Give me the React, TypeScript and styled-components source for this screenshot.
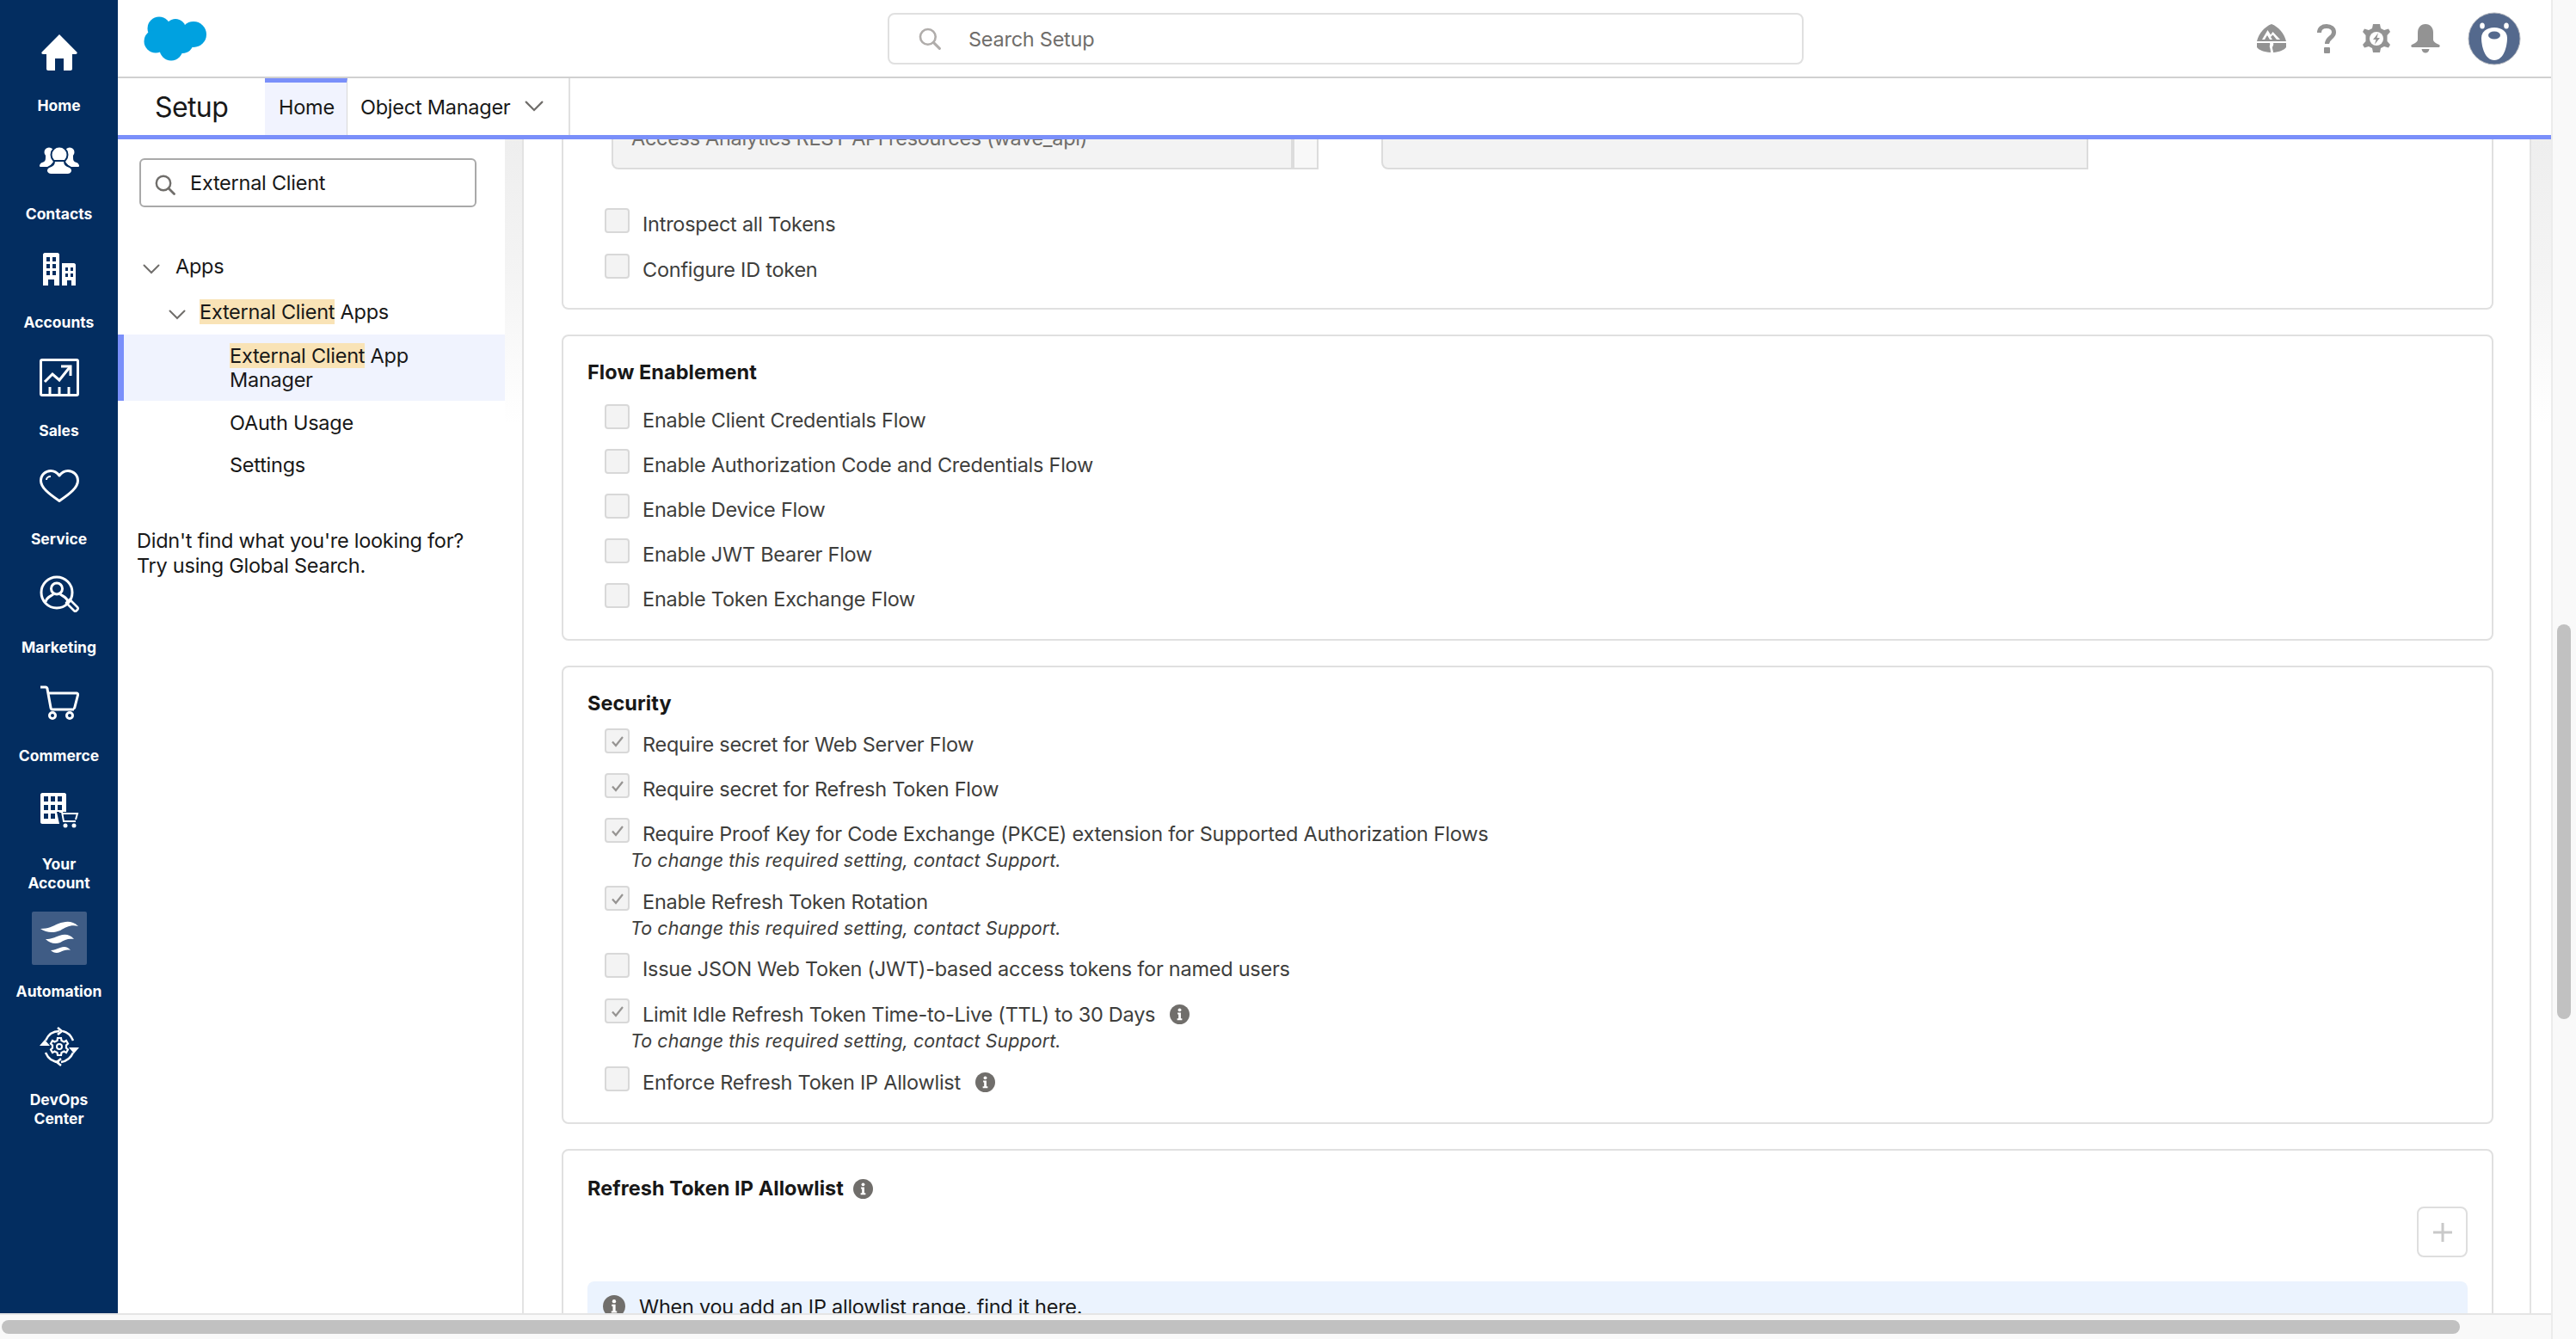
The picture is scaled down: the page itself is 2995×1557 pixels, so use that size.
import React from 'react';
import styled, { createGlobalStyle } from 'styled-components';

const FONT = `Inter, "Liberation Sans", Arial, sans-serif`;

const GlobalStyle = createGlobalStyle`
  html, body {
    margin: 0;
    padding: 0;
    width: 2995px;
    height: 1557px;
    overflow: hidden;
    background: #fff;
  }

  body {
    font-family: ${FONT};
    letter-spacing: -0.25px;
    color: #3e3e3c;
  }
`;

const Page = styled.div`
  display: flex;
  width: 2995px;
  height: 1557px;
`;

const Frame = styled.div`
  display: flex;
  flex-direction: column;
  width: 2966px;
  height: 1557px;
`;

const Shell = styled.div`
  display: flex;
  height: 1527px;
  border-bottom: 2px solid #e5e5e5;
  box-sizing: content-box;
  overflow: hidden;
`;

const Nav = styled.nav`
  width: 137px;
  flex: none;
  background: #032d60;
  padding-top: 19px;
`;

const NavItem = styled.a`
  display: flex;
  flex-direction: column;
  align-items: center;
  padding: 11px 0;
  color: #fff;
`;

const NavIcon = styled.div<{ $active?: boolean }>`
  display: flex;
  align-items: center;
  justify-content: center;
  width: 64px;
  height: 62px;
  background: ${(p) => (p.$active ? '#3f5c85' : 'transparent')};
  border-radius: 2px;
`;

const NavLabel = styled.div`
  margin-top: 20px;
  font-size: 17.5px;
  line-height: 22px;
  font-weight: 700;
  letter-spacing: 0;
  text-align: center;
  white-space: pre-line;
`;

const Main = styled.div`
  flex: 1;
  min-width: 0;
  display: flex;
  flex-direction: column;
`;

const TopBar = styled.header`
  display: flex;
  align-items: center;
  height: 91px;
  flex: none;
  box-sizing: border-box;
  border-bottom: 2px solid #d0d0d0;
  padding-left: 30px;
`;

const GlobalSearch = styled.div`
  display: flex;
  align-items: center;
  box-sizing: border-box;
  width: 1065px;
  height: 60px;
  margin-left: 792px;
  margin-top: 1px;
  padding-left: 34px;
  border: 2px solid #e0e0e0;
  border-radius: 8px;
  font-size: 23.5px;
  color: #706e6b;
`;

const GlobalSearchText = styled.span`
  margin-left: 32px;
`;

const TopIcons = styled.div`
  display: flex;
  align-items: center;
  margin-left: 527px;
`;

const TopIconSlot = styled.div<{ $gap?: number }>`
  display: flex;
  margin-left: ${(p) => p.$gap ?? 0}px;
`;

const TabBar = styled.div`
  display: flex;
  align-items: stretch;
  height: 71px;
  flex: none;
  box-sizing: border-box;
  border-bottom: 5px solid #7a8ffa;
`;

const AppName = styled.div`
  display: flex;
  align-items: center;
  width: 171px;
  padding-left: 43px;
  box-sizing: border-box;
  font-size: 32px;
  letter-spacing: -0.6px;
  color: #181818;
`;

const TabHome = styled.div`
  display: flex;
  align-items: center;
  box-sizing: border-box;
  width: 96px;
  padding: 0 0 5px 16px;
  background: #f1f3fe;
  border-top: 5px solid #7a8ffa;
  border-right: 1px solid #d8d8d8;
  font-size: 23.5px;
  color: #181818;
`;

const TabObject = styled.div`
  display: flex;
  align-items: center;
  gap: 17px;
  box-sizing: border-box;
  width: 259px;
  padding-left: 15px;
  border-right: 2px solid #e0e0e0;
  font-size: 23.5px;
  color: #181818;
`;

const Body = styled.div`
  flex: 1;
  min-height: 0;
  display: flex;
`;

const SetupPanel = styled.aside`
  width: 450px;
  flex: none;
`;

const QuickFind = styled.div`
  display: flex;
  align-items: center;
  box-sizing: border-box;
  width: 392px;
  height: 57px;
  margin: 22px 0 0 25px;
  padding-left: 16px;
  border: 2px solid #a9a9a9;
  border-radius: 6px;
  font-size: 23.5px;
  color: #181818;

  svg {
    margin-top: 5px;
  }
`;

const QuickFindText = styled.span`
  margin-left: 17px;
`;

const Tree = styled.div`
  margin-top: 41px;
  font-size: 23.5px;
  color: #181818;
`;

const TreeRow = styled.div<{ $indent: number; $h: number }>`
  display: flex;
  align-items: center;
  height: ${(p) => p.$h}px;
  padding-left: ${(p) => p.$indent}px;
`;

const Caret = styled.span<{ $w: number }>`
  display: flex;
  width: ${(p) => p.$w}px;
  flex: none;
  margin-top: 7px;
`;

const Selected = styled.div`
  display: flex;
  align-items: center;
  box-sizing: border-box;
  height: 77px;
  padding-left: 123px;
  background: #f0f3fe;
  border-left: 7px solid #7a8ffa;
  line-height: 28px;
`;

const Mark = styled.mark`
  background: #f9e3b6;
  color: inherit;
`;

const NotFound = styled.p`
  margin: 49px 0 0 22px;
  font-size: 23.5px;
  line-height: 29px;
  color: #181818;
`;

const Gutter = styled.div<{ $w: number; $border?: boolean }>`
  width: ${(p) => p.$w}px;
  flex: none;
  box-sizing: border-box;
  background: linear-gradient(to bottom, #eeeeee 0, #f4f4f4 160px, #ffffff 330px);
  border-right: ${(p) => (p.$border ? '2px solid #e3e3e3' : 'none')};
`;

const Content = styled.main`
  flex: 1;
  min-width: 0;
  display: flex;
  flex-direction: column;
  gap: 29px;
  padding: 0 42px 0 44px;
  overflow: hidden;
  border-right: 2px solid #e3e3e3;
`;

const Card = styled.section<{ $top?: number; $clipped?: boolean; $bottom?: number }>`
  flex: none;
  box-sizing: border-box;
  padding: ${(p) => p.$top ?? 27}px 28px ${(p) => p.$bottom ?? 13}px;
  border: 2px solid #e0e0e0;
  border-top-width: ${(p) => (p.$clipped ? '0' : '2px')};
  border-radius: ${(p) => (p.$clipped ? '0 0 8px 8px' : '8px')};
`;

const CardTitle = styled.h3<{ $gap: number }>`
  display: flex;
  align-items: center;
  gap: 11px;
  margin: 0 0 ${(p) => p.$gap}px;
  font-size: 23.5px;
  line-height: 30px;
  font-weight: 700;
  letter-spacing: 0.05px;
  color: #181818;
`;

const DualList = styled.div`
  display: flex;
  margin: 0 0 45px 28px;
`;

const ListBox = styled.div<{ $w: number }>`
  width: ${(p) => p.$w}px;
  height: 35px;
  box-sizing: border-box;
  overflow: hidden;
  background: #f3f3f3;
  border: 2px solid #dcdcdc;
  border-top: 0;
  border-radius: 0 0 0 8px;
  padding-left: 21px;
  font-size: 23.5px;
  line-height: 30px;
  letter-spacing: -0.3px;
  color: #706e6b;
`;

const ListText = styled.div`
  margin-top: -16px;
  white-space: nowrap;
`;

const ListTrack = styled.div`
  width: 30px;
  height: 35px;
  margin-right: 73px;
  box-sizing: border-box;
  background: #f8f8f8;
  border: 2px solid #dcdcdc;
  border-top: 0;
`;

const CheckItem = styled.div<{ $h: number }>`
  height: ${(p) => p.$h}px;
  margin-left: 20px;
`;

const CheckRow = styled.div`
  display: flex;
  height: 29px;
`;

const CheckBox = styled.span`
  display: flex;
  align-items: center;
  justify-content: center;
  flex: none;
  box-sizing: border-box;
  width: 29px;
  height: 29px;
  background: #f3f3f3;
  border: 2px solid #d8d8d8;
  border-radius: 4px;
`;

const CheckLabel = styled.span`
  display: flex;
  align-items: center;
  gap: 17px;
  margin-left: 15px;
  margin-top: 4px;
  height: 29px;
  font-size: 23.5px;
  color: #3e3e3c;
  white-space: nowrap;
`;

const Hint = styled.div`
  margin: 7px 0 0 30px;
  font-size: 21.5px;
  line-height: 26px;
  font-style: italic;
  letter-spacing: 0.05px;
  color: #3e3e3c;
`;

const ButtonRow = styled.div`
  display: flex;
  justify-content: flex-end;
  margin-top: 6px;
`;

const IconButton = styled.div`
  display: flex;
  align-items: center;
  justify-content: center;
  box-sizing: border-box;
  width: 59px;
  height: 59px;
  border: 2px solid #dedede;
  border-radius: 8px;
`;

const InfoBar = styled.div`
  display: flex;
  align-items: flex-start;
  gap: 16px;
  margin-top: 28px;
  height: 70px;
  padding: 16px 18px 0;
  box-sizing: border-box;
  background: #ebf3fe;
  border-radius: 8px;
  font-size: 23.5px;
  line-height: 28px;
  color: #181818;
`;

const HScroll = styled.div`
  flex: 1;
  display: flex;
  align-items: center;
  background: #f9f9f9;
  padding: 0 2px;
`;

const HThumb = styled.div`
  width: 2858px;
  height: 16px;
  margin-top: -1px;
  background: #c1c1c1;
  border-radius: 8px;
`;

const VScroll = styled.div`
  flex: 1;
  background: #f9f9f9;
  border-left: 2px solid #ececec;
  padding-top: 726px;
`;

const VThumb = styled.div`
  width: 16px;
  height: 459px;
  margin-left: 5px;
  background: #c1c1c1;
  border-radius: 8px;
`;

const Glyph = styled.svg`
  flex: none;
`;

const Info = ({ size = 23 }: { size?: number }) => (
  <Glyph width={size} height={size} viewBox="0 0 24 24">
    <circle cx="12" cy="12" r="12" fill="#706e6b" />
    <circle cx="12" cy="6.6" r="2" fill="#fff" />
    <path d="M9.5 10h4v7h1.5v2H9v-2h1.6v-5H9.5z" fill="#fff" />
  </Glyph>
);

const Chevron = ({ size = 20, color = '#706e6b' }: { size?: number; color?: string }) => (
  <svg width={size} height={size * 0.6} viewBox="0 0 20 12" fill="none">
    <path d="M1.5 1.5 10 10l8.5-8.5" stroke={color} strokeWidth="2" strokeLinecap="round" />
  </svg>
);

const SearchIcon = ({ color, w, h }: { color: string; w: number; h: number }) => (
  <Glyph width={w} height={h} viewBox="0 0 24 24" fill="none">
    <circle cx="10" cy="10" r="8.2" stroke={color} strokeWidth="2.4" />
    <path d="m16 16 6.5 6.5" stroke={color} strokeWidth="2.8" strokeLinecap="round" />
  </Glyph>
);

const Check = () => (
  <svg width="16" height="14" viewBox="0 0 16 14" fill="none">
    <path d="M2 7.5 6 12 14 2" stroke="#969492" strokeWidth="2.2" />
  </svg>
);

const Cloud = () => (
  <Glyph width="73" height="52" viewBox="0 0 73 52">
    <g fill="#00a1e0">
      <circle cx="18" cy="14" r="13.5" />
      <circle cx="37" cy="15" r="12" />
      <circle cx="58" cy="21" r="15" />
      <circle cx="45" cy="30" r="13" />
      <circle cx="32" cy="38" r="13.5" />
      <circle cx="14" cy="29" r="13.5" />
      <rect x="14" y="12" width="40" height="26" />
    </g>
  </Glyph>
);

const TrailheadIcon = () => (
  <svg width="34" height="34" viewBox="0 0 34 34">
    <path
      fillRule="evenodd"
      d="M17 0C9 3 2 11 0 20h34C32 11 25 3 17 0zM6 18l6.500-11 3.500 5.500L18.500 9 27 18h-4l-4.500-5.500L16 15l2 3h-3l-3-5-3 5z"
      fill="#939393"
    />
    <path
      d="M0 22h15c1 2-1 3 0 5 .4 1.400 1 3.500 1 6C8 32.500 2 30 0 27zM19 22h15v5c-2 3-8 5.500-15 6 0-2-1-3.500-1-5.500 0-2 2-3 1-5.500z"
      fill="#939393"
    />
  </svg>
);

const HelpIcon = () => (
  <svg width="22" height="34" viewBox="0 0 22 34" fill="none">
    <path d="M2.500 10C2.500 5 6 2.500 11 2.500c5 0 8.500 3 8.500 7 0 6.500-8 6-8 13.500" stroke="#939393" strokeWidth="5" />
    <rect x="8" y="27" width="7" height="7" rx="1" fill="#939393" />
  </svg>
);

const GearIcon = () => (
  <svg width="32" height="34" viewBox="0 0 32 34">
    <path
      d="M12 0h8l1 5 4 2 5-1.500 2 3.500-3.500 4v7l3.500 4-2 3.500-5-1.500-4 2-1 5h-8l-1-5-4-2-5 1.500-2-3.500 3.500-4v-7L0 9l2-3.500L7 7l4-2z"
      fill="#939393"
      strokeLinejoin="round"
    />
    <circle cx="16" cy="17" r="8" fill="#fff" />
    <path d="M18 10.500 12 18h3.500l-1.500 5.500 6-7.500h-3.500z" fill="#939393" />
  </svg>
);

const BellIcon = () => (
  <svg width="34" height="34" viewBox="0 0 34 34">
    <path
      d="M17 0c-6 0-9 4.500-9 10v8c0 2-2 4-7 6-1 .5-1 3 .500 3h31c1.500 0 1.500-2.500.500-3-5-2-7-4-7-6v-8C26 4.500 23 0 17 0z"
      fill="#939393"
    />
    <path d="M12.500 29h9c-.5 3-2.500 4.500-4.500 4.500S13 32 12.500 29z" fill="#939393" />
  </svg>
);

const Avatar = () => (
  <svg width="62" height="62" viewBox="0 0 62 62">
    <circle cx="31" cy="31" r="30" fill="#54698d" stroke="#b0b4bc" strokeWidth="1" />
    <ellipse cx="17" cy="16" rx="2.800" ry="3.500" fill="#fff" />
    <ellipse cx="45" cy="16" rx="2.800" ry="3.500" fill="#fff" />
    <path d="M31 18c-9 0-15 5-15 12 0 10 4 26 15 26s15-16 15-26c0-7-6-12-15-12z" fill="#fff" />
    <ellipse cx="31" cy="27" rx="7" ry="4.500" fill="#54698d" />
  </svg>
);

const HomeIcon = () => (
  <svg width="42" height="42" viewBox="0 0 42 42">
    <path
      d="M21 0 .7 20.500c-.8 1-.3 2.500 1.300 2.500h4v17c0 1.200.8 2 2 2h8V28h10v14h8c1.200 0 2-.8 2-2V23h4c1.600 0 2.100-1.500 1.300-2.500z"
      fill="#fff"
    />
  </svg>
);

const ContactsIcon = () => (
  <svg width="46" height="34" viewBox="0 0 46 34" fill="#fff">
    <circle cx="11" cy="7" r="5.500" />
    <circle cx="35" cy="7" r="5.500" />
    <path d="M7 11h8l3 5-7 8H1c-2 0-1-4 2-5 4-1 4-3 4-8zM39 11h-8l-3 5 7 8h10c2 0 1-4-2-5-4-1-4-3-4-8z" />
    <circle cx="23" cy="10" r="9.500" stroke="#032d60" strokeWidth="2" />
    <path
      d="M17 17h12c0 4 1 5 6 7 3 1 4 5 2 7-1 2-3 2-4 2H13c-1 0-3 0-4-2-2-2-1-6 2-7 5-2 6-3 6-7z"
      stroke="#032d60"
      strokeWidth="2"
    />
  </svg>
);

const AccountsIcon = () => (
  <svg width="38" height="38" viewBox="0 0 38 38" fill="#fff" fillRule="evenodd">
    <path d="M0 2c0-1 1-2 2-2h15c1 0 2 1 2 2v36h-6v-7H6v7H0zM4 5v5h4V5zm7 0v5h4V5zM4 13v5h4v-5zm7 0v5h4v-5zM4 21v5h4v-5zm7 0v5h4v-5z" />
    <path d="M22 12h14c1 0 2 1 2 2v24h-5v-6h-5v6h-6zm4 5v4h3v-4zm6 0v4h3v-4zm-6 7v4h3v-4zm6 0v4h3v-4z" />
  </svg>
);

const SalesIcon = () => (
  <svg width="46" height="44" viewBox="0 0 46 44" fill="none" stroke="#fff" strokeWidth="3">
    <rect x="1.500" y="1.500" width="43" height="41" rx="1.500" />
    <path d="M6 27l9-9 8 7L35 10" />
    <path d="M25 9h11v11" />
    <path d="M12 43v-10M23 43v-10M34 43v-10" />
  </svg>
);

const ServiceIcon = () => (
  <svg width="46" height="38" viewBox="0 0 46 38" fill="none" stroke="#fff" strokeWidth="3">
    <path
      d="M23 7c3-4 7-5.500 10-5.500C39 1.500 44.500 6 44.500 13c0 8-9 15-21.500 23.500C10.500 28 1.500 21 1.500 13 1.500 6 7 1.500 13 1.500c3 0 7 1.500 10 5.500z"
      strokeLinejoin="round"
    />
    <path d="M8 12c0-2 2-4 5-4" strokeWidth="2" />
  </svg>
);

const MarketingIcon = () => (
  <svg width="46" height="44" viewBox="0 0 46 44" fill="none" stroke="#fff" strokeWidth="3">
    <circle cx="20" cy="20" r="18" />
    <circle cx="20" cy="15.500" r="6.500" />
    <path d="M7 31c1-6 7-7 9-9M33 31c-1-6-7-7-9-9" />
    <path d="m31 32 4-4 9 9c1 1 1 2 0 3l-1 1c-1 1-2 1-3 0z" strokeWidth="2.500" strokeLinejoin="round" />
  </svg>
);

const CommerceIcon = () => (
  <svg width="46" height="41" viewBox="0 0 46 41" fill="none" stroke="#fff" strokeWidth="3">
    <path d="M1 2h6c1 0 2 1 2 2l4 22c0 1 1 2 2 2h25" />
    <path d="M10 9h33c1 0 2 1 1.600 2l-3.600 14c0 1-1 2-2 2" />
    <circle cx="15" cy="35" r="3.500" />
    <circle cx="35" cy="35" r="3.500" />
  </svg>
);

const YourAccountIcon = () => (
  <svg width="46" height="42" viewBox="0 0 46 42">
    <path
      fillRule="evenodd"
      fill="#fff"
      d="M1 2c0-1 1-2 2-2h26c1 0 2 1 2 2v20h-11l3 14H3c-1 0-2-1-2-2zM5 4v6h5V4zm8 0v6h5V4zm8 0v6h5V4zM5 14v6h5v-6zm8 0v6h5v-6zm8 0v6h5v-6zM5 24v6h5v-6zm8 0v6h5v-6z"
    />
    <path d="M23 22h3l2 11h14M26 24h18l-2 7" fill="none" stroke="#fff" strokeWidth="2" />
    <circle cx="30" cy="38" r="2.500" fill="#fff" />
    <circle cx="40" cy="38" r="2.500" fill="#fff" />
  </svg>
);

const AutomationIcon = () => (
  <svg width="44" height="42" viewBox="0 0 44 42" fill="#fff">
    <path d="M0 10c9 0 14-3 21-6 8-3 16-4 23 3-9-2-14 1-21 5-7 3-16 3-23-2z" />
    <path d="M6 22c7 0 10-2 16-4 6-2 12-2 17 4-7-1-11 1-16 4-6 2-12 1-17-4z" />
    <path d="M12 35c4 0 7-2 11-3 5-2 9-1 12 3-4-1-8 0-12 2-4 2-8 1-11-2z" />
  </svg>
);

const DevOpsIcon = () => (
  <svg width="46" height="46" viewBox="0 0 46 46" fill="none" stroke="#fff" strokeWidth="2.500">
    <path d="M7 16C10 9 16 5 23 5M39 16c-3-7-7-10-12-11M7 30c3 7 9 11 16 11M39 30c-3 7-8 10-14 11" />
    <path d="M21 1l5 4-5 4M25 37l-5 4 5 4" strokeLinejoin="round" />
    <path d="M0 22l6-7 6 7zM34 24l6 7 6-7z" fill="#fff" stroke="none" />
    <circle cx="23" cy="23" r="3" strokeWidth="2" />
    <path
      d="M21 13h4l.5 3 3 1.500 2.500-1.500 2 3.500-2 2v3l2 2-2 3.500-2.500-1.500-3 1.500-.5 3h-4l-.5-3-3-1.500-2.500 1.500-2-3.500 2-2v-3l-2-2 2-3.500 2.500 1.500 3-1.500z"
      strokeWidth="2.200"
    />
  </svg>
);

const navItems = [
  { label: 'Home', icon: <HomeIcon /> },
  { label: 'Contacts', icon: <ContactsIcon /> },
  { label: 'Accounts', icon: <AccountsIcon /> },
  { label: 'Sales', icon: <SalesIcon /> },
  { label: 'Service', icon: <ServiceIcon /> },
  { label: 'Marketing', icon: <MarketingIcon /> },
  { label: 'Commerce', icon: <CommerceIcon /> },
  { label: 'Your\nAccount', icon: <YourAccountIcon /> },
  { label: 'Automation', icon: <AutomationIcon />, active: true },
  { label: 'DevOps\nCenter', icon: <DevOpsIcon /> },
];

const HINT = 'To change this required setting, contact Support.';

const flowRows = [
  'Enable Client Credentials Flow',
  'Enable Authorization Code and Credentials Flow',
  'Enable Device Flow',
  'Enable JWT Bearer Flow',
  'Enable Token Exchange Flow',
];

const securityRows = [
  { label: 'Require secret for Web Server Flow', checked: true, h: 52 },
  { label: 'Require secret for Refresh Token Flow', checked: true, h: 52 },
  {
    label: 'Require Proof Key for Code Exchange (PKCE) extension for Supported Authorization Flows',
    checked: true,
    hint: true,
    h: 79,
  },
  { label: 'Enable Refresh Token Rotation', checked: true, hint: true, h: 78 },
  { label: 'Issue JSON Web Token (JWT)-based access tokens for named users', h: 53 },
  { label: 'Limit Idle Refresh Token Time-to-Live (TTL) to 30 Days', checked: true, hint: true, info: true, h: 79 },
  { label: 'Enforce Refresh Token IP Allowlist', info: true, h: 52 },
];

const CheckField = ({
  label,
  checked,
  hint,
  info,
  h = 52,
}: {
  label: string;
  checked?: boolean;
  hint?: boolean;
  info?: boolean;
  h?: number;
}) => (
  <CheckItem $h={h}>
    <CheckRow>
      <CheckBox>{checked && <Check />}</CheckBox>
      <CheckLabel>
        {label}
        {info && <Info />}
      </CheckLabel>
    </CheckRow>
    {hint && <Hint>{HINT}</Hint>}
  </CheckItem>
);

export default function App() {
  return (
    <Page>
      <GlobalStyle />
      <Frame>
        <Shell>
          <Nav>
            {navItems.map((item) => (
              <NavItem key={item.label}>
                <NavIcon $active={item.active}>{item.icon}</NavIcon>
                <NavLabel>{item.label}</NavLabel>
              </NavItem>
            ))}
          </Nav>
          <Main>
            <TopBar>
              <Cloud />
              <GlobalSearch>
                <SearchIcon color="#b0adab" w={26} h={26} />
                <GlobalSearchText>Search Setup</GlobalSearchText>
              </GlobalSearch>
              <TopIcons>
                <TopIconSlot>
                  <TrailheadIcon />
                </TopIconSlot>
                <TopIconSlot $gap={36}>
                  <HelpIcon />
                </TopIconSlot>
                <TopIconSlot $gap={31}>
                  <GearIcon />
                </TopIconSlot>
                <TopIconSlot $gap={24}>
                  <BellIcon />
                </TopIconSlot>
                <TopIconSlot $gap={32}>
                  <Avatar />
                </TopIconSlot>
              </TopIcons>
            </TopBar>
            <TabBar>
              <AppName>Setup</AppName>
              <TabHome>Home</TabHome>
              <TabObject>
                Object Manager
                <Chevron size={22} />
              </TabObject>
            </TabBar>
            <Body>
              <SetupPanel>
                <QuickFind>
                  <SearchIcon color="#706e6b" w={24} h={24} />
                  <QuickFindText>External Client</QuickFindText>
                </QuickFind>
                <Tree>
                  <TreeRow $indent={29} $h={54}>
                    <Caret $w={38}>
                      <Chevron />
                    </Caret>
                    Apps
                  </TreeRow>
                  <TreeRow $indent={59} $h={53}>
                    <Caret $w={36}>
                      <Chevron />
                    </Caret>
                    <span>
                      <Mark>External Client</Mark> Apps
                    </span>
                  </TreeRow>
                  <Selected>
                    <span>
                      <Mark>External Client</Mark> App
                      <br />
                      Manager
                    </span>
                  </Selected>
                  <TreeRow $indent={130} $h={50}>
                    OAuth Usage
                  </TreeRow>
                  <TreeRow $indent={130} $h={49}>
                    Settings
                  </TreeRow>
                </Tree>
                <NotFound>
                  Didn't find what you're looking for?
                  <br />
                  Try using Global Search.
                </NotFound>
              </SetupPanel>
              <Gutter $w={22} $border />
              <Content>
                <Card $clipped $top={0} $bottom={11}>
                  <DualList>
                    <ListBox $w={792}>
                      <ListText>Access Analytics REST API resources (wave_api)</ListText>
                    </ListBox>
                    <ListTrack />
                    <ListBox $w={822} />
                  </DualList>
                  <CheckField label="Introspect all Tokens" h={53} />
                  <CheckField label="Configure ID token" />
                </Card>
                <Card>
                  <CardTitle $gap={22}>Flow Enablement</CardTitle>
                  {flowRows.map((label) => (
                    <CheckField key={label} label={label} />
                  ))}
                </Card>
                <Card>
                  <CardTitle $gap={14}>Security</CardTitle>
                  {securityRows.map((row) => (
                    <CheckField key={row.label} {...row} />
                  ))}
                </Card>
                <Card $top={29}>
                  <CardTitle $gap={0}>
                    Refresh Token IP Allowlist
                    <Info />
                  </CardTitle>
                  <ButtonRow>
                    <IconButton>
                      <svg width="22" height="22" viewBox="0 0 22 22" fill="none">
                        <path d="M11 0v22M0 11h22" stroke="#c9c9c9" strokeWidth="3" />
                      </svg>
                    </IconButton>
                  </ButtonRow>
                  <InfoBar>
                    <Info size={26} />
                    When you add an IP allowlist range, find it here.
                  </InfoBar>
                </Card>
              </Content>
              <Gutter $w={23} />
            </Body>
          </Main>
        </Shell>
        <HScroll>
          <HThumb />
        </HScroll>
      </Frame>
      <VScroll>
        <VThumb />
      </VScroll>
    </Page>
  );
}
